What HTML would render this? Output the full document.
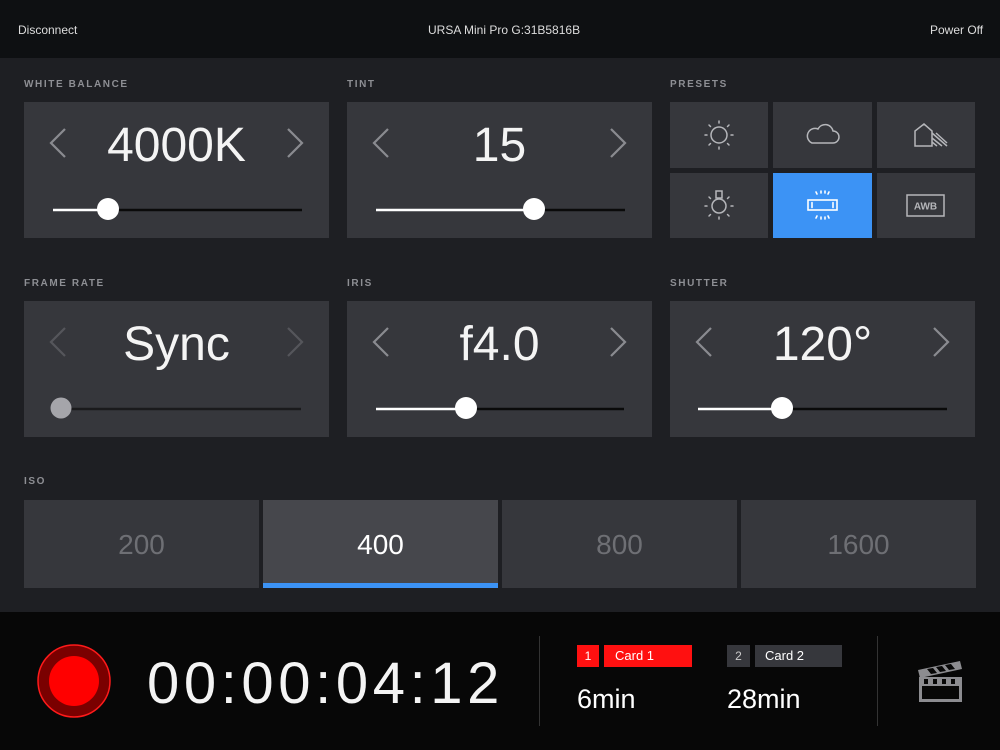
<!DOCTYPE html>
<html><head><meta charset="utf-8"><style>
*{margin:0;padding:0;box-sizing:border-box}
body{width:1000px;height:750px;background:#1e1f23;position:relative;overflow:hidden;font-family:"Liberation Sans",sans-serif;color:#fff}
.a{position:absolute}
.top{left:0;top:0;width:1000px;height:58px;background:#0e1012;font-size:12px;color:#ddd}
.lbl{font-size:10px;font-weight:bold;letter-spacing:1.6px;color:#8e8f94}
.p{background:#36373c}
.val{font-size:48px;text-align:center;width:305px;top:16px;color:#f4f4f4}
.iso{top:500px;height:88px;width:235px;background:#36373c;font-size:28px;color:#6e6f74;text-align:center;line-height:90px}
</style></head><body>
<div class="a top"><span class="a" style="left:18px;top:23px">Disconnect</span><span class="a" style="left:428px;top:23px">URSA Mini Pro G:31B5816B</span><span class="a" style="left:930px;top:23px">Power Off</span></div>

<div class="a lbl" style="left:24px;top:79px">WHITE BALANCE</div>
<div class="a lbl" style="left:347px;top:79px">TINT</div>
<div class="a lbl" style="left:670px;top:79px">PRESETS</div>
<div class="a lbl" style="left:24px;top:278px">FRAME RATE</div>
<div class="a lbl" style="left:347px;top:278px">IRIS</div>
<div class="a lbl" style="left:670px;top:278px">SHUTTER</div>
<div class="a lbl" style="left:24px;top:476px">ISO</div>

<div class="a p" style="left:24px;top:102px;width:305px;height:136px"><div class="a val">4000K</div></div>
<div class="a p" style="left:347px;top:102px;width:305px;height:136px"><div class="a val">15</div></div>
<div class="a p" style="left:24px;top:301px;width:305px;height:136px"><div class="a val">Sync</div></div>
<div class="a p" style="left:347px;top:301px;width:305px;height:136px"><div class="a val">f4.0</div></div>
<div class="a p" style="left:670px;top:301px;width:305px;height:136px"><div class="a val">120°</div></div>

<svg class="a" style="left:0;top:0" width="1000" height="750">
<g fill="none" stroke-width="2.2">
<g stroke="#8a8b90">
<polyline points="65,129 51,143 65,157"/><polyline points="288,129 302,143 288,157"/>
<polyline points="388,129 374,143 388,157"/><polyline points="611,129 625,143 611,157"/>
<polyline points="388,328 374,342 388,356"/><polyline points="611,328 625,342 611,356"/>
<polyline points="711,328 697,342 711,356"/><polyline points="934,328 948,342 934,356"/>
</g>
<g stroke="#55565b"><polyline points="65,328 51,342 65,356"/><polyline points="288,328 302,342 288,356"/></g>
</g>
<g stroke-width="2.5">
<line x1="53" y1="210" x2="108" y2="210" stroke="#fff"/><line x1="108" y1="210" x2="302" y2="210" stroke="#0a0a0a"/>
<line x1="376" y1="210" x2="534" y2="210" stroke="#fff"/><line x1="534" y1="210" x2="625" y2="210" stroke="#0a0a0a"/>
<line x1="61" y1="409" x2="301" y2="409" stroke="#1a1a1c"/>
<line x1="376" y1="409" x2="466" y2="409" stroke="#fff"/><line x1="466" y1="409" x2="624" y2="409" stroke="#0a0a0a"/>
<line x1="698" y1="409" x2="782" y2="409" stroke="#fff"/><line x1="782" y1="409" x2="947" y2="409" stroke="#0a0a0a"/>
</g>
<circle cx="108" cy="209" r="11" fill="#fff"/><circle cx="534" cy="209" r="11" fill="#fff"/>
<circle cx="61" cy="408" r="10.5" fill="#a5a5aa"/><circle cx="466" cy="408" r="11" fill="#fff"/><circle cx="782" cy="408" r="11" fill="#fff"/>

<rect x="670" y="102" width="98" height="66" fill="#36373c"/>
<rect x="773" y="102" width="99" height="66" fill="#36373c"/>
<rect x="877" y="102" width="98" height="66" fill="#36373c"/>
<rect x="670" y="173" width="98" height="65" fill="#36373c"/>
<rect x="773" y="173" width="99" height="65" fill="#3c93f5"/>
<rect x="877" y="173" width="98" height="65" fill="#36373c"/>
<g fill="none" stroke="#b5b6ba" stroke-width="1.5">
<circle cx="719" cy="135" r="8"/>
<g stroke-linecap="round"><line x1="719" y1="121" x2="719" y2="123"/><line x1="719" y1="147" x2="719" y2="149"/><line x1="705" y1="135" x2="707" y2="135"/><line x1="731" y1="135" x2="733" y2="135"/><line x1="709" y1="125" x2="710.5" y2="126.5"/><line x1="729" y1="125" x2="727.5" y2="126.5"/><line x1="709" y1="145" x2="710.5" y2="143.5"/><line x1="729" y1="145" x2="727.5" y2="143.5"/></g>
<path d="M812,143 h21 a6,6 0 0 0 0,-12 a8,8 0 0 0 -15,-2 a6,6 0 0 0 -6,14 z"/>
<path d="M915,146 v-15 l9,-7 l8,7 v15 z"/><path d="M932,133 l15,13 M932,138 l10,8 M932,142 l5,4 M936,133 l11,10"/>
<circle cx="719" cy="206" r="7"/><rect x="716" y="191" width="6" height="7"/>
<g stroke-linecap="round"><line x1="705" y1="206" x2="707" y2="206"/><line x1="731" y1="206" x2="733" y2="206"/><line x1="719" y1="217" x2="719" y2="219"/><line x1="709" y1="216" x2="710.5" y2="214.5"/><line x1="729" y1="216" x2="727.5" y2="214.5"/><line x1="709" y1="197" x2="710.5" y2="198.5"/><line x1="729" y1="197" x2="727.5" y2="198.5"/></g>
<rect x="907" y="195" width="37" height="21"/>
</g>
<text x="925.5" y="209.5" font-family="Liberation Sans" font-size="10" font-weight="bold" fill="#b5b6ba" text-anchor="middle">AWB</text>
<g fill="none" stroke="#fff" stroke-width="1.6" stroke-linecap="round">
<rect x="808" y="200" width="29" height="10"/><line x1="812" y1="202.5" x2="812" y2="207.5"/><line x1="833" y1="202.5" x2="833" y2="207.5"/>
<line x1="816" y1="192" x2="817" y2="194"/><line x1="821" y1="191" x2="821" y2="193"/><line x1="825" y1="191" x2="825" y2="193"/><line x1="829" y1="192" x2="828" y2="194"/>
<line x1="816" y1="218" x2="817" y2="216"/><line x1="821" y1="219" x2="821" y2="217"/><line x1="825" y1="219" x2="825" y2="217"/><line x1="829" y1="218" x2="828" y2="216"/>
</g>
</svg>

<div class="a iso" style="left:24px">200</div>
<div class="a iso" style="left:263px;background:#46474c;color:#fff">400</div>
<div class="a" style="left:263px;top:583px;width:235px;height:5px;background:#3c93f5"></div>
<div class="a iso" style="left:502px">800</div>
<div class="a iso" style="left:741px">1600</div>

<div class="a" style="left:0;top:612px;width:1000px;height:138px;background:#070707"></div>
<svg class="a" style="left:0;top:612px" width="1000" height="138">
<circle cx="74" cy="69" r="36" fill="#7a0000" stroke="#ff1a1a" stroke-width="1.5"/>
<circle cx="74" cy="69" r="25" fill="#ff0000"/>
<line x1="539.5" y1="24" x2="539.5" y2="114" stroke="#333" />
<line x1="877.5" y1="24" x2="877.5" y2="114" stroke="#333"/>
<g fill="#8c8c90">
<rect x="919" y="65" width="43" height="25"/>
<path d="M918,58 l42,-9 l2,8 l-42,9 z"/>
</g>
<rect x="922" y="74" width="37" height="13" fill="#070707"/>
<g fill="#070707"><path d="M927,57 l6,-1 l4,5 l-6,1 z M936,55 l6,-1 l4,5 l-6,1 z M945,53 l6,-1 l4,5 l-6,1 z"/><rect x="924" y="67" width="4" height="5"/><rect x="933" y="67" width="4" height="5"/><rect x="942" y="67" width="4" height="5"/><rect x="951" y="67" width="4" height="5"/></g>
</svg>
<div class="a" style="left:147px;top:650px;font-size:58px;letter-spacing:4.6px;color:#f4f4f4">00:00:04:12</div>
<div class="a" style="left:577px;top:645px;width:22px;height:22px;background:#ff1010;font-size:12px;text-align:center;line-height:22px">1</div>
<div class="a" style="left:604px;top:645px;width:88px;height:22px;background:#ff1010;font-size:13px;line-height:22px;padding-left:11px">Card 1</div>
<div class="a" style="left:727px;top:645px;width:23px;height:22px;background:#36373c;font-size:12px;text-align:center;line-height:22px;color:#ccc">2</div>
<div class="a" style="left:755px;top:645px;width:87px;height:22px;background:#36373c;font-size:13px;line-height:22px;padding-left:10px">Card 2</div>
<div class="a" style="left:577px;top:684px;font-size:27px">6min</div>
<div class="a" style="left:727px;top:684px;font-size:27px">28min</div>
</body></html>
